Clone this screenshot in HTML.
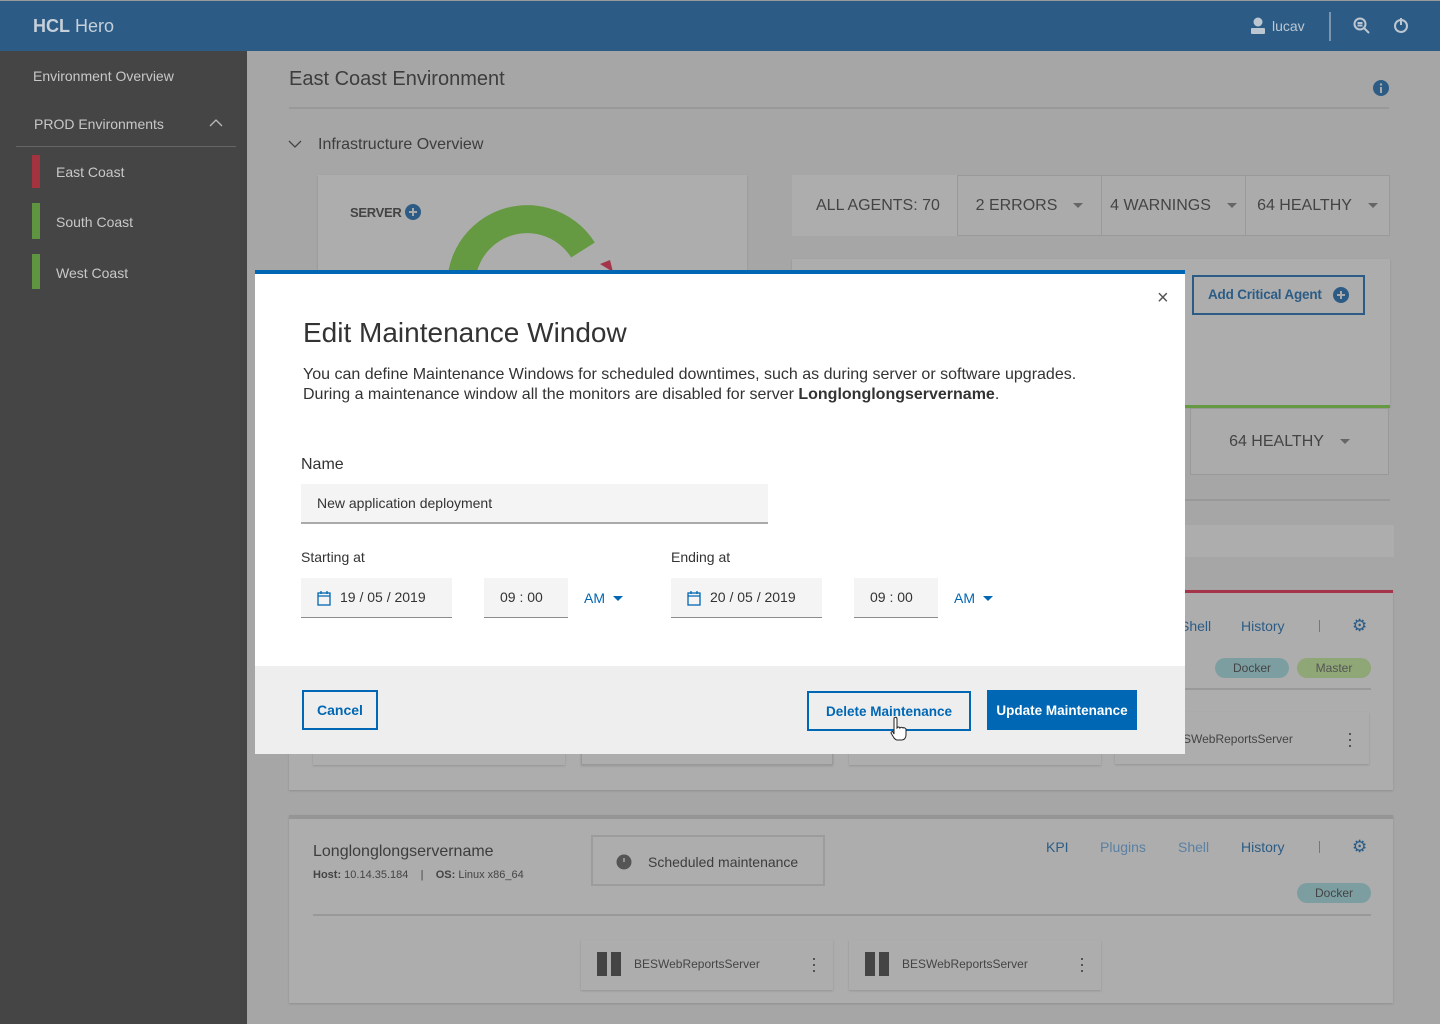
<!DOCTYPE html>
<html><head><meta charset="utf-8"><style>
*{box-sizing:border-box;margin:0;padding:0}
body{width:1440px;height:1024px;overflow:hidden;position:relative;background:#a6a6a6;font-family:"Liberation Sans",sans-serif;color:#3a3a3a}
.a{position:absolute}
.hdr{left:0;top:0;width:1440px;height:51px;background:#2c5c85;border-top:1px solid #9a9a9a}
.side{left:0;top:51px;width:247px;height:973px;background:#454545}
.st{color:#c8c8c8;font-size:14px}
.card{background:#adadad;box-shadow:0 1px 2px rgba(0,0,0,.15)}
.box{background:#ababab;border:1px solid #999;font-size:16px;color:#444;display:flex;align-items:center;justify-content:center}
.tri{display:inline-block;border-left:5px solid transparent;border-right:5px solid transparent;border-top:5px solid #666;margin-left:16px}
.lnk{font-size:14px;color:#2c5c85}
.modal{left:255px;top:270px;width:930px;height:484px;background:#fff;border-top:4px solid #0067b4}
.inp{background:#f4f4f4;border-bottom:1px solid #8c8c8c;font-size:14px;color:#333}
.btn{font-size:14px;font-weight:bold;display:flex;align-items:center;justify-content:center}
</style></head><body>
<div class="a hdr"><div class="a" style="left:33px;top:15px;font-size:18px;color:#c5d0da"><b>HCL</b> Hero</div>
<svg class="a" style="left:1250px;top:16px" width="16" height="18"><circle cx="8" cy="5" r="4.5" fill="#bcc7d1"/><rect x="1" y="11" width="14" height="6" rx="1" fill="#bcc7d1"/></svg>
<div class="a" style="left:1272px;top:17px;font-size:14px;color:#bcc7d1">lucav</div>
<div class="a" style="left:1329px;top:11px;width:2px;height:29px;background:#7a95ad"></div>
<svg class="a" style="left:1353px;top:16px" width="18" height="18" fill="none" stroke="#bcc7d1" stroke-width="2"><circle cx="7" cy="7" r="5.5"/><path d="M11 11l5 5M4.5 6h5M4.5 8.5h5"/></svg>
<svg class="a" style="left:1393px;top:15px" width="16" height="18" fill="none" stroke="#bcc7d1" stroke-width="2"><circle cx="8" cy="10" r="6"/><path d="M8 2v7"/></svg>
</div>
<div class="a side">
<div class="a st" style="left:33px;top:17px">Environment Overview</div>
<div class="a st" style="left:34px;top:65px">PROD Environments</div>
<svg class="a" style="left:209px;top:67px" width="14" height="9" fill="none" stroke="#bbb" stroke-width="1.3"><path d="M1 8l6-6 6 6"/></svg>
<div class="a" style="left:16px;top:95px;width:220px;height:1px;background:#666"></div>
<div class="a" style="left:32px;top:104px;width:8px;height:33px;background:#a3343f"></div>
<div class="a st" style="left:56px;top:113px">East Coast</div>
<div class="a" style="left:32px;top:152px;width:8px;height:36px;background:#5f9440"></div>
<div class="a st" style="left:56px;top:163px">South Coast</div>
<div class="a" style="left:32px;top:203px;width:8px;height:35px;background:#5f9440"></div>
<div class="a st" style="left:56px;top:214px">West Coast</div>
</div>
<div class="a" style="left:289px;top:68px;font-size:20px;color:#3d3d3d">East Coast Environment</div>
<svg class="a" style="left:1372px;top:79px" width="18" height="18"><circle cx="9" cy="9" r="8" fill="#2c5c85"/><rect x="8" y="8" width="2" height="6" fill="#aaa"/><circle cx="9" cy="5.5" r="1.2" fill="#aaa"/></svg>
<div class="a" style="left:289px;top:107px;width:1100px;height:2px;background:#999"></div>
<svg class="a" style="left:288px;top:140px" width="14" height="9" fill="none" stroke="#444" stroke-width="1.3"><path d="M1 1l6 6 6-6"/></svg>
<div class="a" style="left:318px;top:136px;font-size:16px;color:#3d3d3d">Infrastructure Overview</div>
<div class="a card" style="left:318px;top:175px;width:429px;height:100px"></div>
<div class="a" style="left:350px;top:205px;font-size:13px;font-weight:bold;color:#444;letter-spacing:-0.3px">SERVER</div>
<svg class="a" style="left:405px;top:204px" width="16" height="16"><circle cx="8" cy="8" r="8" fill="#2c5c85"/><path d="M8 4v8M4 8h8" stroke="#aaa" stroke-width="2"/></svg>
<svg class="a" style="left:440px;top:200px" width="190" height="70"><path d="M26 110 A66 66 0 0 1 143 50" fill="none" stroke="#659a42" stroke-width="28"/><path d="M160 64 L170 60 L173 72 Z" fill="#a3344a"/></svg>
<div class="a box" style="left:792px;top:175px;width:166px;height:61px;border:none;background:#adadad;justify-content:flex-start;padding-left:24px">ALL AGENTS: 70</div>
<div class="a box" style="left:957px;top:175px;width:145px;height:61px">2 ERRORS<span class="tri"></span></div>
<div class="a box" style="left:1101px;top:175px;width:145px;height:61px">4 WARNINGS<span class="tri"></span></div>
<div class="a box" style="left:1245px;top:175px;width:145px;height:61px">64 HEALTHY<span class="tri"></span></div>
<div class="a card" style="left:792px;top:259px;width:598px;height:148px"></div>
<div class="a" style="left:1192px;top:275px;width:173px;height:40px;border:2px solid #2c5c85;font-size:13.5px;font-weight:bold;color:#2c5c85;padding:10px 0 0 14px;letter-spacing:-0.2px">Add Critical Agent</div>
<svg class="a" style="left:1333px;top:287px" width="16" height="16"><circle cx="8" cy="8" r="8" fill="#2c5c85"/><path d="M8 4v8M4 8h8" stroke="#aaa" stroke-width="2"/></svg>
<div class="a" style="left:1185px;top:405px;width:205px;height:3px;background:#659a42"></div>
<div class="a box" style="left:1190px;top:408px;width:199px;height:67px">64 HEALTHY<span class="tri"></span></div>
<div class="a" style="left:1185px;top:499px;width:205px;height:2px;background:#999"></div>
<div class="a" style="left:1185px;top:525px;width:209px;height:32px;background:#adadad"></div>
<div class="a card" style="left:289px;top:590px;width:1104px;height:200px;border-top:3px solid #a3344a"></div>
<div class="a lnk" style="left:1180px;top:618px">Shell</div>
<div class="a lnk" style="left:1241px;top:618px">History</div>
<div class="a" style="left:1319px;top:620px;width:1px;height:12px;background:#777"></div>
<div class="a" style="left:1352px;top:616px;font-size:17px;color:#2c5c85">⚙</div>
<div class="a" style="left:1215px;top:658px;width:74px;height:20px;border-radius:10px;background:#7d9ea1;font-size:12px;text-align:center;line-height:20px;color:#444">Docker</div>
<div class="a" style="left:1297px;top:658px;width:74px;height:20px;border-radius:10px;background:#8fa676;font-size:12px;text-align:center;line-height:20px;color:#555">Master</div>
<div class="a" style="left:1185px;top:688px;width:186px;height:2px;background:#999"></div>
<div class="a card" style="left:1115px;top:712px;width:254px;height:52px"></div>
<div class="a" style="left:1183px;top:732px;font-size:12px;color:#444">SWebReportsServer</div>
<div class="a" style="left:1347px;top:730px;font-size:18px;line-height:6px;color:#444">·<br>·<br>·</div>
<div class="a card" style="left:289px;top:815px;width:1104px;height:188px;border-top:4px solid #959595"></div>
<div class="a" style="left:313px;top:843px;font-size:16px;color:#3d3d3d">Longlonglongservername</div>
<div class="a" style="left:313px;top:869px;font-size:11px;color:#444"><b>Host:</b> 10.14.35.184 &nbsp; &nbsp;| &nbsp; &nbsp;<b>OS:</b> Linux x86_64</div>
<div class="a" style="left:591px;top:835px;width:234px;height:51px;border:2px solid #9c9c9c;background:#adadad"></div>
<svg class="a" style="left:616px;top:854px" width="16" height="16"><circle cx="8" cy="8" r="7.5" fill="#555"/><path d="M8 4v4" stroke="#aaa" stroke-width="1.5"/></svg>
<div class="a" style="left:648px;top:854px;font-size:14px;color:#3d3d3d">Scheduled maintenance</div>
<div class="a lnk" style="left:1046px;top:839px">KPI</div>
<div class="a lnk" style="left:1100px;top:839px;color:#5a80a3">Plugins</div>
<div class="a lnk" style="left:1178px;top:839px;color:#5a80a3">Shell</div>
<div class="a lnk" style="left:1241px;top:839px">History</div>
<div class="a" style="left:1319px;top:841px;width:1px;height:12px;background:#777"></div>
<div class="a" style="left:1352px;top:837px;font-size:17px;color:#2c5c85">⚙</div>
<div class="a" style="left:1297px;top:883px;width:74px;height:20px;border-radius:10px;background:#7d9ea1;font-size:12px;text-align:center;line-height:20px;color:#444">Docker</div>
<div class="a" style="left:313px;top:914px;width:1058px;height:2px;background:#999"></div>
<div class="a card" style="left:581px;top:940px;width:252px;height:50px"></div>
<div class="a card" style="left:849px;top:940px;width:252px;height:50px"></div>
<svg class="a" style="left:597px;top:952px" width="26" height="24"><rect x="0" y="0" width="10" height="24" fill="#444"/><rect x="14" y="0" width="10" height="24" fill="#444"/></svg>
<svg class="a" style="left:865px;top:952px" width="26" height="24"><rect x="0" y="0" width="10" height="24" fill="#444"/><rect x="14" y="0" width="10" height="24" fill="#444"/></svg>
<div class="a" style="left:634px;top:957px;font-size:12px;color:#444">BESWebReportsServer</div>
<div class="a" style="left:902px;top:957px;font-size:12px;color:#444">BESWebReportsServer</div>
<div class="a" style="left:811px;top:955px;font-size:18px;line-height:6px;color:#444">·<br>·<br>·</div>
<div class="a" style="left:1079px;top:955px;font-size:18px;line-height:6px;color:#444">·<br>·<br>·</div>
<div class="a card" style="left:313px;top:745px;width:252px;height:20px"></div>
<div class="a card" style="left:581px;top:745px;width:252px;height:20px;border:1px solid #999"></div>
<div class="a card" style="left:849px;top:745px;width:252px;height:20px"></div>

<div class="a modal">
<div class="a" style="left:902px;top:13px;font-size:20px;color:#555">×</div>
<div class="a" style="left:48px;top:43px;font-size:28px;color:#333">Edit Maintenance Window</div>
<div class="a" style="left:48px;top:91px;font-size:16px;line-height:20px;color:#333">You can define Maintenance Windows for scheduled downtimes, such as during server or software upgrades.<br>During a maintenance window all the monitors are disabled for server <b>Longlonglongservername</b>.</div>
<div class="a" style="left:46px;top:182px;font-size:16px;color:#333">Name</div>
<div class="a inp" style="left:46px;top:210px;width:467px;height:40px;padding:11px 16px;border-bottom:2px solid #aaa">New application deployment</div>
<div class="a" style="left:46px;top:275px;font-size:14px;color:#333">Starting at</div>
<div class="a" style="left:416px;top:275px;font-size:14px;color:#333">Ending at</div>
<div class="a inp" style="left:46px;top:304px;width:151px;height:40px;padding:11px 0 0 39px">19 / 05 / 2019</div>
<svg class="a" style="left:62px;top:316px" width="14" height="16" fill="none" stroke="#0067b4" stroke-width="1.3"><rect x="1" y="3" width="12" height="12"/><path d="M1 6h12M4 1v3M10 1v3"/></svg>
<div class="a inp" style="left:229px;top:304px;width:84px;height:40px;padding:11px 0 0 16px">09 : 00</div>
<div class="a" style="left:329px;top:316px;font-size:14px;color:#0067b4">AM</div>
<div class="a" style="left:358px;top:322px;border-left:5px solid transparent;border-right:5px solid transparent;border-top:5px solid #0067b4"></div>
<div class="a inp" style="left:416px;top:304px;width:151px;height:40px;padding:11px 0 0 39px">20 / 05 / 2019</div>
<svg class="a" style="left:432px;top:316px" width="14" height="16" fill="none" stroke="#0067b4" stroke-width="1.3"><rect x="1" y="3" width="12" height="12"/><path d="M1 6h12M4 1v3M10 1v3"/></svg>
<div class="a inp" style="left:599px;top:304px;width:84px;height:40px;padding:11px 0 0 16px">09 : 00</div>
<div class="a" style="left:699px;top:316px;font-size:14px;color:#0067b4">AM</div>
<div class="a" style="left:728px;top:322px;border-left:5px solid transparent;border-right:5px solid transparent;border-top:5px solid #0067b4"></div>
<div class="a" style="left:0;top:392px;width:930px;height:88px;background:#eeeeee">
<div class="a btn" style="left:47px;top:24px;width:76px;height:40px;border:2px solid #0067b4;color:#0067b4">Cancel</div>
<div class="a btn" style="left:552px;top:25px;width:164px;height:40px;border:2px solid #0067b4;color:#0067b4;font-size:13.5px">Delete Maintenance</div>
<div class="a btn" style="left:732px;top:24px;width:150px;height:40px;background:#0067b4;color:#fff;font-size:13.5px">Update Maintenance</div>
<svg class="a" style="left:634px;top:50px" width="20" height="26"><path d="M5 2c1-1 3-1 3 1v9l1-1c1 0 2 0 2 1 1-1 2-1 3 0 1-1 2 0 3 1v6c0 3-2 5-4 5H8c-1 0-2-1-3-2l-3-5c0-1 1-2 2-1l1 2z" fill="#fff" stroke="#222" stroke-width="1"/></svg>
</div>
</div>
</body></html>
